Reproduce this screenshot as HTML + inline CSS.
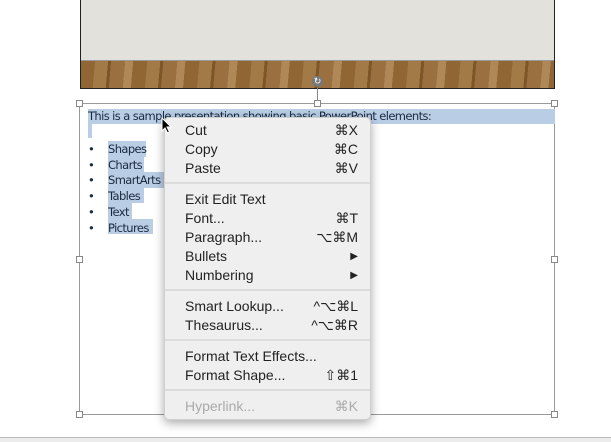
<!DOCTYPE html>
<html><head><style>
body{margin:0;width:611px;height:442px;overflow:hidden;background:#fff;position:relative;font-family:"Liberation Sans",sans-serif}
.a{position:absolute}
.h{position:absolute;width:7px;height:7px;border:1px solid #888;background:#fff;box-sizing:border-box}
.m{position:absolute;left:164px;top:117px;width:207px;height:303px;background:#efefef;border-radius:5px;box-shadow:0 3px 10px rgba(0,0,0,.35);border:1px solid #d0d0d0;box-sizing:border-box}
.i{position:absolute;left:20px;right:12px;font-size:14px;color:#222;height:19px;line-height:19px}
.i span{position:absolute;right:0}
.s{position:absolute;left:0;right:0;height:2px;background:#dcdcdc}
.t{position:absolute;font-size:11.5px;color:#1a2a40;font-family:"DejaVu Sans",sans-serif;letter-spacing:-0.6px}
.hl{position:absolute;background:#b9cde5}
</style></head><body>
<div class="a" style="left:80px;top:0;width:475px;height:89px;background:#e3e1dc;border:1px solid #222;border-top:none;box-sizing:border-box"></div>
<div class="a" style="left:81px;top:61px;width:473px;height:27px;background:repeating-linear-gradient(95deg,#8f6634 0 14px,#a27a48 14px 27px,#7d5628 27px 30px,#9a7040 30px 44px,#b08858 44px 52px)"></div>
<div class="a" style="left:81px;top:60px;width:473px;height:1px;background:#999"></div>
<div class="a" style="left:79px;top:103px;width:476px;height:312px;border:1px solid #999;box-sizing:border-box"></div>
<div class="a" style="left:317px;top:88px;width:1px;height:15px;background:#888"></div>
<div class="a" style="left:312px;top:76px;width:11px;height:11px;border-radius:50%;background:#777;color:#fff;font-size:9px;line-height:11px;text-align:center">↻</div>
<div class="h" style="left:76px;top:100px"></div><div class="h" style="left:314px;top:100px"></div><div class="h" style="left:551px;top:100px"></div>
<div class="h" style="left:76px;top:256px"></div><div class="h" style="left:551px;top:256px"></div>
<div class="h" style="left:76px;top:411px"></div><div class="h" style="left:551px;top:411px"></div>
<div class="hl" style="left:88px;top:109px;width:467px;height:15px"></div>
<div class="hl" style="left:88px;top:124px;width:4px;height:14px"></div>
<div class="t" style="left:88px;top:109px">This is a sample presentation showing basic PowerPoint elements:</div>
<div class="hl" style="left:108px;top:141px;width:38px;height:16px"></div>
<div class="hl" style="left:108px;top:157px;width:36px;height:15px"></div>
<div class="hl" style="left:108px;top:172px;width:56px;height:16px"></div>
<div class="hl" style="left:108px;top:188px;width:36px;height:15px"></div>
<div class="hl" style="left:108px;top:203px;width:24px;height:16px"></div>
<div class="hl" style="left:108px;top:219px;width:45px;height:15px"></div>
<div class="t" style="left:88px;top:142px;line-height:15.7px">•<br>•<br>•<br>•<br>•<br>•</div>
<div class="t" style="left:108px;top:142px;line-height:15.7px">Shapes<br>Charts<br>SmartArts<br>Tables<br>Text<br>Pictures</div>
<div class="a" style="left:0;top:437px;width:611px;height:1px;background:#bbb"></div>
<div class="a" style="left:0;top:438px;width:611px;height:4px;background:#ececec"></div>
<div class="m">
<div class="i" style="top:3px">Cut<span>⌘X</span></div>
<div class="i" style="top:22px">Copy<span>⌘C</span></div>
<div class="i" style="top:41px">Paste<span>⌘V</span></div>
<div class="s" style="top:64px"></div>
<div class="i" style="top:72px">Exit Edit Text</div>
<div class="i" style="top:91px">Font...<span>⌘T</span></div>
<div class="i" style="top:110px">Paragraph...<span>⌥⌘M</span></div>
<div class="i" style="top:129px">Bullets<span style="font-size:10px">▶</span></div>
<div class="i" style="top:148px">Numbering<span style="font-size:10px">▶</span></div>
<div class="s" style="top:171px"></div>
<div class="i" style="top:179px">Smart Lookup...<span>^⌥⌘L</span></div>
<div class="i" style="top:198px">Thesaurus...<span>^⌥⌘R</span></div>
<div class="s" style="top:221px"></div>
<div class="i" style="top:229px">Format Text Effects...</div>
<div class="i" style="top:248px">Format Shape...<span>⇧⌘1</span></div>
<div class="s" style="top:271px"></div>
<div class="i" style="top:279px;color:#aaa">Hyperlink...<span>⌘K</span></div>
</div>
<svg class="a" style="left:161px;top:117px" width="12" height="18" viewBox="0 0 12 18"><path d="M1 1L1 14L4 11L6.5 16L8.5 15L6 10L10 10Z" fill="#000" stroke="#fff" stroke-width="1"/></svg>
</body></html>
